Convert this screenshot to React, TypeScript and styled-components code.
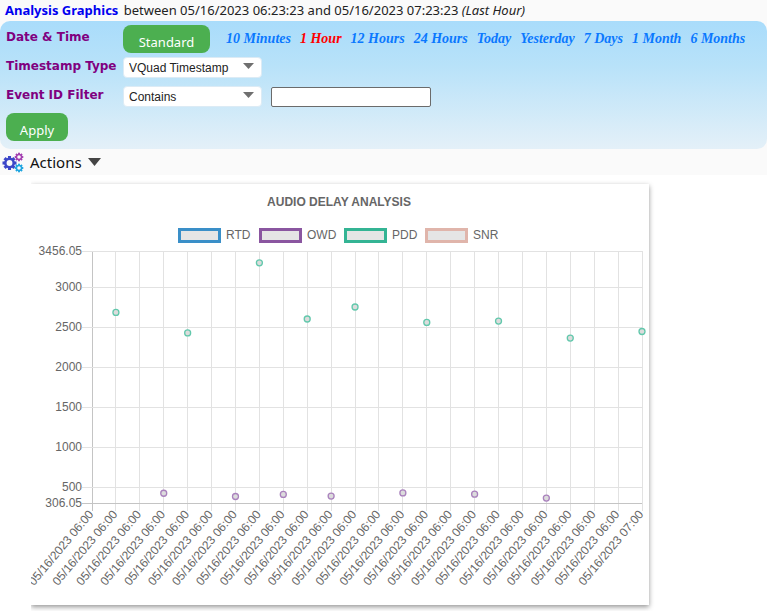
import React from 'react';
import styled, { createGlobalStyle, css } from 'styled-components';

const GlobalStyle = createGlobalStyle`
  * { box-sizing: border-box; }
  body { margin: 0; background: #fff; font-family: "Noto Sans", sans-serif; color: #222; }
`;

const Heading = styled.h1`
  margin: 0;
  padding: 0 5px;
  height: 21px;
  background: #fafafa;
  font-size: 13px;
  line-height: 21px;
  font-weight: 400;
  white-space: nowrap;
`;
const Name = styled.strong`
  margin-right: 2px;
  color: #0000f0;
`;
const PanelBack = styled.div`
  background: #fafafa;
`;
const Panel = styled.form`
  padding: 4px 6px 8px;
  border-radius: 10px;
  background: linear-gradient(#a9dcfb, #b8e2f9 35%, #e4f0f8);
`;
const Row = styled.div`
  display: flex;
  align-items: center;
  height: 29px;

  &:first-child {
    height: 28px;
  }
`;
const labelText = css`
  width: 117px;
  flex: none;
  padding-bottom: 4px;
  font: bold 12px/18px "DejaVu Sans", sans-serif;
  color: #800080;
  white-space: nowrap;
`;
const Label = styled.label`
  ${labelText}
`;
const Caption = styled.span`
  ${labelText}
`;
const Button = styled.button<{ $wide?: boolean }>`
  width: ${(p) => (p.$wide ? 87 : 62)}px;
  height: 28px;
  flex: none;
  padding: 6px 0 0;
  border: 0;
  border-radius: 8px;
  background: #4caf50;
  color: #fff;
  font: 13px/20px "Noto Sans", sans-serif;
`;
const SubmitRow = styled.div`
  display: flex;
  padding-top: 2px;
`;
const Ranges = styled.nav`
  display: flex;
  gap: 9px;
  margin-left: 16px;
`;
const Range = styled.a<{ $active?: boolean }>`
  color: ${(p) => (p.$active ? '#ff0000' : '#0a78ff')};
  font: italic bold 14px/20px "Liberation Serif", serif;
  text-decoration: none;
  white-space: nowrap;
`;
const SelectBox = styled.div`
  position: relative;
  width: 139px;
  flex: none;
`;
const Select = styled.select`
  display: block;
  width: 100%;
  height: 21px;
  padding: 0 24px 0 5px;
  border: 1px solid #dcebf5;
  border-radius: 4px;
  background: #fff;
  color: #222;
  appearance: none;
  font: 12px/18px "Liberation Sans", sans-serif;
`;
const Caret = styled.svg`
  position: absolute;
  top: 6px;
  right: 8px;
  pointer-events: none;
`;
const Field = styled.input`
  width: 160px;
  height: 20px;
  margin-left: 9px;
  border: 1px solid #6b6b6b;
  border-radius: 2px;
  background: #fff;
`;
const ActionsBar = styled.div`
  height: 26px;
  background: #fafafa;
  padding: 0 2px;
`;
const ActionsButton = styled.button`
  display: flex;
  align-items: center;
  height: 26px;
  gap: 6px;
  padding: 0;
  border: 0;
  background: none;
  color: #111;
  font: 15px/24px "Noto Sans", sans-serif;
`;
const ChartArea = styled.main`
  overflow: hidden;
  margin-left: 31px;
  padding: 9px 9px 6px 0;
`;
const Card = styled.section`
  width: 100%;
  max-width: 618px;
  background: #fff;
  box-shadow: 0 2px 5px rgba(0, 0, 0, 0.42);
`;
const Chart = styled.svg`
  display: block;
  width: 100%;
  height: auto;
  font-family: "Liberation Sans", sans-serif;
  font-size: 12px;
  fill: #666;
`;

const RANGES = ['10 Minutes', '1 Hour', '12 Hours', '24 Hours', 'Today', 'Yesterday', '7 Days', '1 Month', '6 Months'];

const MIN = 306.05;
const MAX = 3456.05;
const PLOT = { left: 61, right: 611, top: 67, bottom: 319 };
const COUNT = 24;
const xAt = (i: number) => PLOT.left + (i * (PLOT.right - PLOT.left)) / (COUNT - 1);
const yAt = (v: number) => PLOT.bottom - ((v - MIN) / (MAX - MIN)) * (PLOT.bottom - PLOT.top);
const Y_TICKS = [3456.05, 3000, 2500, 2000, 1500, 1000, 500, 306.05];

const LEGEND = [
  { label: 'RTD', color: '#3a8fc8', x: 147 },
  { label: 'OWD', color: '#8a56a0', x: 228 },
  { label: 'PDD', color: '#34b494', x: 313 },
  { label: 'SNR', color: '#e0b5ab', x: 394 },
];
const PDD: [number, number][] = [[1, 2688], [4, 2432], [7, 3308], [9, 2606], [11, 2756], [14, 2563], [17, 2580], [20, 2368], [23, 2450]];
const OWD: [number, number][] = [[3, 428], [6, 387], [8, 413], [10, 392], [13, 432], [16, 416], [19, 368]];

function Gear({ cx, cy, r, color, teeth }: { cx: number; cy: number; r: number; color: string; teeth: number }) {
  return (
    <g transform={`translate(${cx} ${cy})`} fill={color}>
      {Array.from({ length: teeth }, (_, i) => (
        <rect key={i} x={-r * 0.22} y={-r} width={r * 0.44} height={r * 0.45} transform={`rotate(${(i * 360) / teeth})`} />
      ))}
      <circle r={r * 0.6} fill="none" stroke={color} strokeWidth={r * 0.36} />
    </g>
  );
}

function Dropdown({ id, value, options }: { id: string; value: string; options: string[] }) {
  return (
    <SelectBox>
      <Select id={id} defaultValue={value}>
        {options.map((o) => <option key={o}>{o}</option>)}
      </Select>
      <Caret width="11" height="6" viewBox="0 0 11 6" aria-hidden="true"><path d="M0 0H11L5.5 6Z" fill="#6f6f6f" /></Caret>
    </SelectBox>
  );
}

function DelayChart() {
  return (
    <Chart viewBox="0 0 618 421" role="img" aria-label="Audio delay analysis">
      <text x="308" y="22" textAnchor="middle" fontWeight="bold">AUDIO DELAY ANALYSIS</text>
      {LEGEND.map((l) => (
        <g key={l.label}>
          <rect x={l.x + 1.5} y="45.5" width="40" height="12" fill="#e5e5e5" stroke={l.color} strokeWidth="3" />
          <text x={l.x + 48} y="55">{l.label}</text>
        </g>
      ))}
      <g stroke="#e2e2e2" shapeRendering="crispEdges">
        {Array.from({ length: COUNT }, (_, i) => (
          <line key={i} x1={xAt(i)} x2={xAt(i)} y1={PLOT.top} y2={PLOT.bottom + 8} stroke={i === 0 ? '#c4c4c4' : undefined} />
        ))}
        {Y_TICKS.map((v) => (
          <line key={v} x1={PLOT.left - 10} x2={PLOT.right} y1={yAt(v)} y2={yAt(v)} stroke={v === MIN ? '#c4c4c4' : undefined} />
        ))}
      </g>
      {Y_TICKS.map((v) => (
        <text key={v} x="51" y={yAt(v) + 4} textAnchor="end">{v}</text>
      ))}
      {Array.from({ length: COUNT }, (_, i) => (
        <text key={i} transform={`translate(${xAt(i) - 1} ${PLOT.bottom + 9}) rotate(-50)`} y="4" textAnchor="end">
          {i === COUNT - 1 ? '05/16/2023 07:00' : '05/16/2023 06:00'}
        </text>
      ))}
      {PDD.map(([i, v]) => <circle key={i} cx={xAt(i)} cy={yAt(v)} r="3" fill="#dcdcdc" stroke="#62c8ac" strokeWidth="1.3" />)}
      {OWD.map(([i, v]) => <circle key={i} cx={xAt(i)} cy={yAt(v)} r="3" fill="#dcdcdc" stroke="#aa82bd" strokeWidth="1.3" />)}
    </Chart>
  );
}

export default function App() {
  return (
    <>
      <GlobalStyle />
      <Heading>
        <Name>Analysis Graphics</Name> between 05/16/2023 06:23:23 and 05/16/2023 07:23:23 <em>(Last Hour)</em>
      </Heading>
      <PanelBack>
        <Panel onSubmit={(e) => e.preventDefault()}>
          <Row>
            <Caption>Date &amp; Time</Caption>
            <Button type="button" $wide>Standard</Button>
            <Ranges>
              {RANGES.map((r) => <Range key={r} href="#" $active={r === '1 Hour'}>{r}</Range>)}
            </Ranges>
          </Row>
          <Row>
            <Label htmlFor="timestamp-type">Timestamp Type</Label>
            <Dropdown id="timestamp-type" value="VQuad Timestamp" options={['VQuad Timestamp', 'Server Timestamp']} />
          </Row>
          <Row>
            <Label htmlFor="event-filter">Event ID Filter</Label>
            <Dropdown id="event-filter" value="Contains" options={['Contains', 'Equals']} />
            <Field type="text" aria-label="Event ID" />
          </Row>
          <SubmitRow>
            <Button type="submit">Apply</Button>
          </SubmitRow>
        </Panel>
      </PanelBack>
      <ActionsBar>
        <ActionsButton type="button">
          <svg width="22" height="22" viewBox="0 0 22 22" aria-hidden="true">
            <Gear cx={7.5} cy={12} r={7} color="#3c46c8" teeth={8} />
            <Gear cx={17} cy={6} r={4.3} color="#a33fb0" teeth={8} />
            <Gear cx={17} cy={17} r={4.3} color="#1ea5e0" teeth={8} />
          </svg>
          Actions
          <svg width="13" height="8" viewBox="0 0 13 8" aria-hidden="true"><path d="M0 0H13L6.5 8Z" fill="#444" /></svg>
        </ActionsButton>
      </ActionsBar>
      <ChartArea>
        <Card><DelayChart /></Card>
      </ChartArea>
    </>
  );
}
